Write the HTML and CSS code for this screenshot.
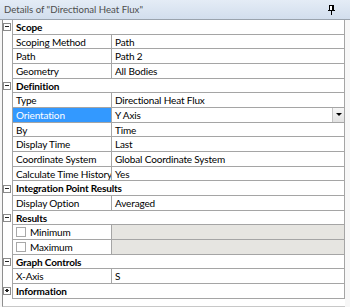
FILE: index.html
```html
<!DOCTYPE html>
<html lang="en">
<head>
    <meta charset="UTF-8">
    <title>Details of "Directional Heat Flux"</title>
    <link rel="stylesheet" href="styles.css">
</head>
<body>
    <div class="panel">
        <div class="title-bar">
            <span class="title">Details of "Directional Heat Flux"</span>
            <svg class="pin" width="7" height="10" viewBox="0 0 7 10">
                <rect x="1.5" y="0.5" width="4" height="5" fill="#fff" stroke="#000"/>
                <rect x="4" y="1" width="1" height="4" fill="#000"/>
                <rect x="0" y="5" width="7" height="1" fill="#000"/>
                <rect x="3" y="6" width="1" height="4" fill="#000"/>
            </svg>
        </div>

        <div class="grid">
            <div class="row">
                <span class="gutter"><span class="toggle"></span></span>
                <span class="category">Scope</span>
            </div>
            <div class="row">
                <span class="gutter"></span>
                <span class="name">Scoping Method</span>
                <span class="value">Path</span>
            </div>
            <div class="row">
                <span class="gutter"></span>
                <span class="name">Path</span>
                <span class="value">Path 2</span>
            </div>
            <div class="row">
                <span class="gutter"></span>
                <span class="name">Geometry</span>
                <span class="value">All Bodies</span>
            </div>

            <div class="row">
                <span class="gutter"><span class="toggle"></span></span>
                <span class="category">Definition</span>
            </div>
            <div class="row">
                <span class="gutter"></span>
                <span class="name">Type</span>
                <span class="value">Directional Heat Flux</span>
            </div>
            <div class="row">
                <span class="gutter"></span>
                <span class="name selected">Orientation</span>
                <span class="value">Y Axis<span class="dropdown"></span></span>
            </div>
            <div class="row">
                <span class="gutter"></span>
                <span class="name">By</span>
                <span class="value">Time</span>
            </div>
            <div class="row">
                <span class="gutter"></span>
                <span class="name">Display Time</span>
                <span class="value">Last</span>
            </div>
            <div class="row">
                <span class="gutter"></span>
                <span class="name">Coordinate System</span>
                <span class="value">Global Coordinate System</span>
            </div>
            <div class="row">
                <span class="gutter"></span>
                <span class="name">Calculate Time History</span>
                <span class="value">Yes</span>
            </div>

            <div class="row">
                <span class="gutter"><span class="toggle"></span></span>
                <span class="category">Integration Point Results</span>
            </div>
            <div class="row">
                <span class="gutter"></span>
                <span class="name">Display Option</span>
                <span class="value">Averaged</span>
            </div>

            <div class="row">
                <span class="gutter"><span class="toggle"></span></span>
                <span class="category">Results</span>
            </div>
            <div class="row">
                <span class="gutter"></span>
                <span class="name"><span class="check"></span>Minimum</span>
                <span class="value disabled"></span>
            </div>
            <div class="row">
                <span class="gutter"></span>
                <span class="name"><span class="check"></span>Maximum</span>
                <span class="value disabled"></span>
            </div>

            <div class="row">
                <span class="gutter"><span class="toggle"></span></span>
                <span class="category">Graph Controls</span>
            </div>
            <div class="row">
                <span class="gutter"></span>
                <span class="name">X-Axis</span>
                <span class="value">S</span>
            </div>

            <div class="row">
                <span class="gutter"><span class="toggle plus"></span></span>
                <span class="category">Information</span>
            </div>
        </div>
    </div>
</body>
</html>
```

FILE: styles.css
```css
:root {
    --grid-line: #a5a5a5;
    --edge: #8e8e8e;
    --select: #3399ff;
    --disabled-bg: #e6e5e1;
}

* {
    box-sizing: border-box;
    margin: 0;
    padding: 0;
}

body {
    font-family: Lato, "Liberation Sans", sans-serif;
    font-size: 10px;
    letter-spacing: -0.15px;
    color: #000;
    background: #f7f7f7;
    width: 350px;
    height: 307px;
    overflow: hidden;
}

.panel {
    height: 307px;
    display: flex;
    flex-direction: column;
}

.title-bar {
    height: 20px;
    display: flex;
    align-items: center;
    justify-content: space-between;
    padding: 0 15px 0 4px;
    background: linear-gradient(#e4ecf6, #d2deed);
    border-bottom: 1px solid #9aa3ad;
}

.title {
    color: #4d4d4d;
    font-size: 9.6px;
    letter-spacing: 0;
}

.pin {
    display: block;
}

.grid {
    flex: 1;
    margin-left: 2px;
    width: 343px;
    border-left: 1px solid var(--edge);
    border-bottom: 1px solid #c8c8c8;
    background: #fff;
}

.row {
    display: flex;
    height: 14.68px;
}

.gutter {
    width: 9px;
    flex-shrink: 0;
    display: flex;
    align-items: center;
}

.toggle {
    position: relative;
    width: 8px;
    height: 8px;
    border: 1px solid #8a8a8a;
    background: #fff;
}

.toggle::before {
    content: "";
    position: absolute;
    left: 1px;
    top: 2px;
    width: 4px;
    height: 1px;
    background: #222;
}

.toggle.plus::after {
    content: "";
    position: absolute;
    left: 2px;
    top: 1px;
    width: 2px;
    height: 3px;
    background: #222;
}

.category,
.name,
.value {
    display: flex;
    align-items: center;
    border-left: 1px solid var(--grid-line);
    border-bottom: 1px solid var(--grid-line);
    white-space: nowrap;
    overflow: hidden;
}

.category {
    flex: 1;
    padding-left: 3px;
    font-weight: bold;
    border-right: 1px solid var(--grid-line);
}

.name {
    width: 99px;
    flex-shrink: 0;
    padding-left: 3px;
}

.name.selected {
    background: var(--select);
    color: #fff;
}

.value {
    flex: 1;
    position: relative;
    padding-left: 3px;
    border-right: 1px solid var(--grid-line);
}

.value.disabled {
    background: var(--disabled-bg);
}

.dropdown {
    position: absolute;
    right: 0;
    top: 0;
    bottom: 0;
    width: 12px;
    background: linear-gradient(#f6f6f6, #e2e2e2);
    border-left: 1px solid #c4c4c4;
}

.dropdown::after {
    content: "";
    position: absolute;
    left: 3px;
    top: 5px;
    border-left: 3px solid transparent;
    border-right: 3px solid transparent;
    border-top: 3px solid #000;
}

.check {
    width: 10px;
    height: 10px;
    margin-right: 4px;
    border: 1px solid #a8a8a8;
    background: #fff;
}
```
